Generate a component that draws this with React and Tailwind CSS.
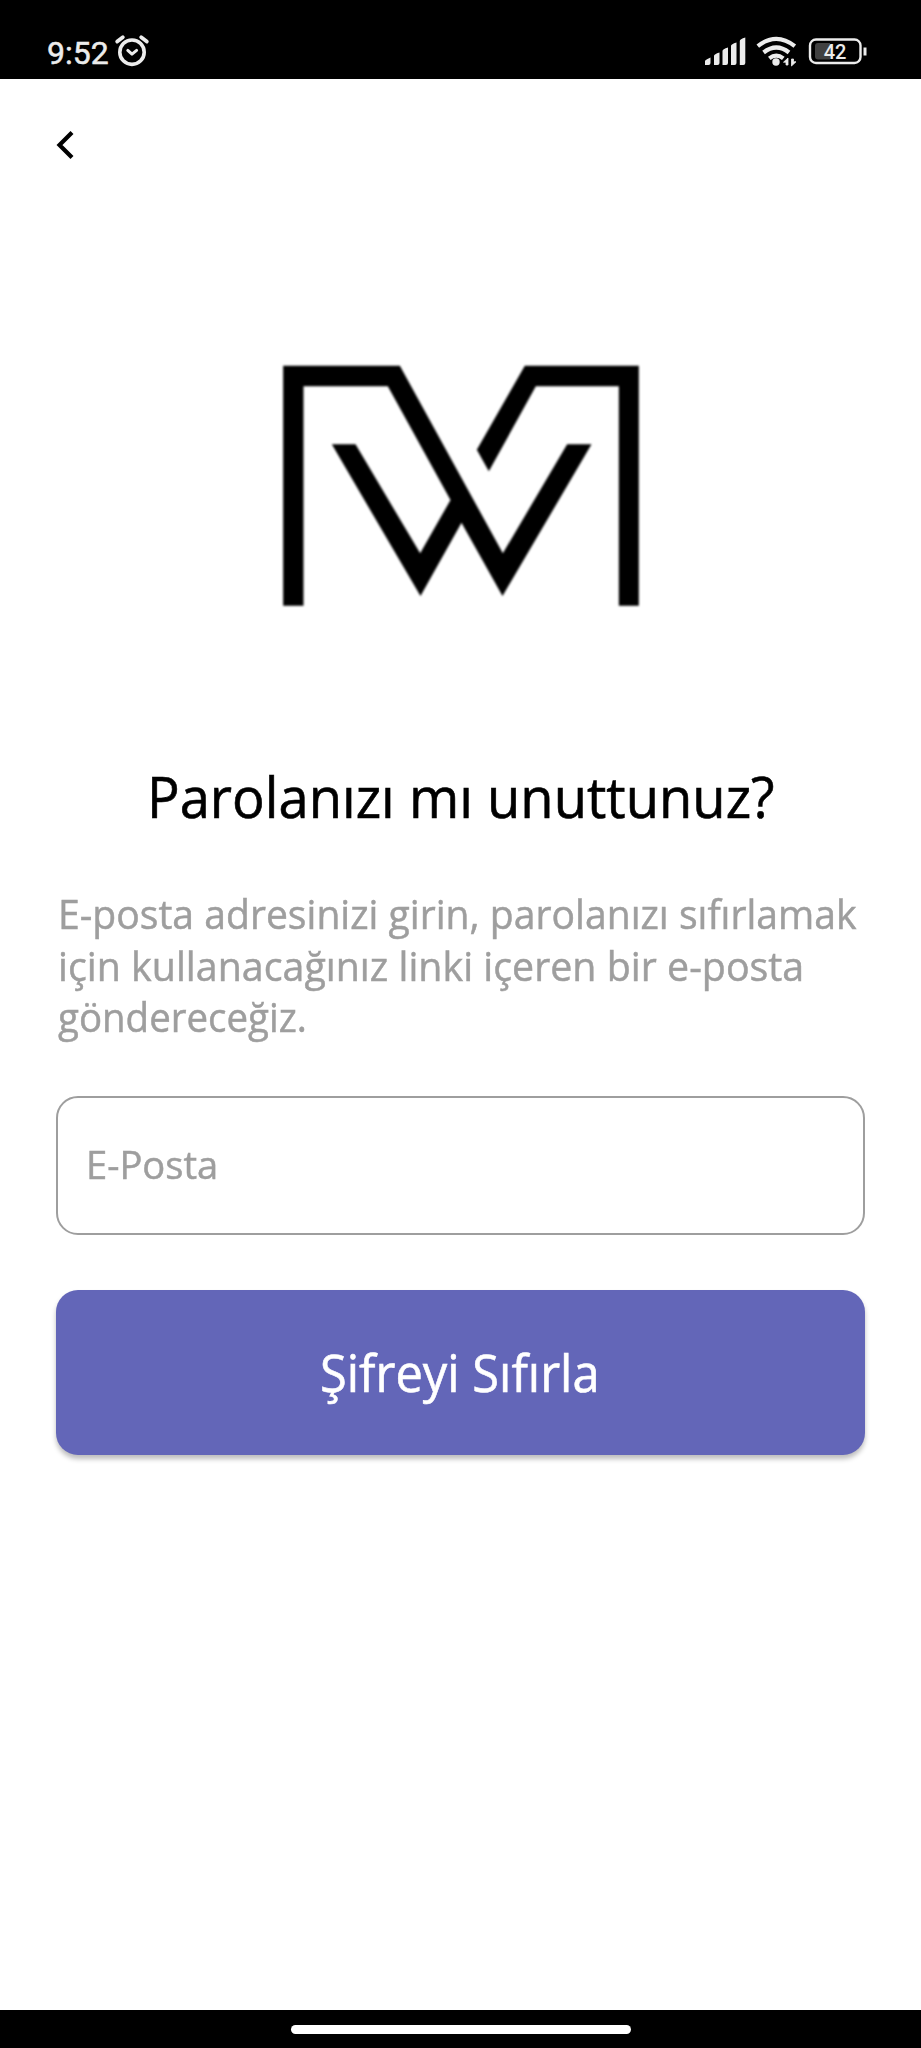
function StatusBar() {
  return (
    <header className="flex h-[79px] shrink-0 items-start justify-between bg-black pr-[53px] pl-[47px]">
      <div className="flex pt-[33px] text-[#ececec]">
        <span className="w-[67px] font-['Roboto',sans-serif] text-[32px] leading-[40px] [-webkit-text-stroke:0.5px]">9:52</span>
        <svg className="mt-[1px] h-[34px] w-[36px]" viewBox="0 0 36 34" fill="none" stroke="#ececec" strokeLinecap="round">
          <circle cx="18" cy="18.2" r="12.2" strokeWidth="3.6" />
          <path d="M3.200 7.5 8.800 3.200M32.800 7.500 27.200 3.200" strokeWidth="3.800" />
          <path d="m13.800 16.400 4.200 3.800 4.600-3.800" strokeWidth="3" strokeLinejoin="round" />
        </svg>
      </div>
      <div className="flex pt-[36px]">
        <svg className="h-[32px] w-[163px]" viewBox="0 0 163 32" fill="none">
          <g fill="#ececec" transform="translate(-.5 0)">
            <path d="M0 26q0-2 6-4.500V27q0 2-2 2H0zM9.500 20q0-2 5.500-3.500V27q0 2-2 2H9.500zM18 15q0-2 5.500-3.500V27q0 2-2 2H18zM26.500 10q0-2 5.500-3.500V27q0 2-2 2h-3.500zM35.300 5q0-2 5.500-3.500V27q0 2-2 2h-3.500z" />
            <circle cx="71.500" cy="26" r="3.700" />
            <path d="m83.500 22-4.500 4.200h2.500V29h2zM87 30l4.500-4.200H89V23h-2z" stroke="#ececec" strokeWidth=".8" />
          </g>
          <g stroke="#ececec" strokeWidth="4.200">
            <path d="M52.800 10.200q18.500-14.500 37 0" />
            <path d="M58.600 16.500q12.700-10 25.400 0" />
            <path d="M64.300 22.300q7-5.500 14 0" />
          </g>
          <rect x="105" y="3.500" width="50.500" height="23.500" rx="6" stroke="#ececec" strokeWidth="2.400" />
          <path d="M110 10q0-3 3-3h12v16.500h-12q-3 0-3-3z" fill="#414141" />
          <path d="M160 11.500v8" stroke="#ececec" strokeWidth="3" />
          <text x="130" y="23" textAnchor="middle" fill="#ececec" fontFamily="Roboto, sans-serif" fontSize="20" fontWeight="500">42</text>
        </svg>
      </div>
    </header>
  );
}

function Logo() {
  return (
    <svg className="mx-auto mt-[169px] h-[300px] w-[400px] shrink-0 blur-[1px]" viewBox="1.500 0 1200 900">
      <path d="M68 77H418L727 640 920 313H993L726 768 603 548 480 768 214 313H285L479 640 570 480 382 139H129V797H68z" />
      <path d="M793 77H1135V797H1075V139H826L685 394 649 329z" />
    </svg>
  );
}

function Text({ className, children }) {
  return <span className={`block w-max origin-left whitespace-nowrap ${className}`}>{children}</span>;
}

export default function App() {
  return (
    <div className="flex h-[2048px] w-[921px] flex-col overflow-hidden bg-white font-['Open_Sans',sans-serif]">
      <StatusBar />
      <button className="ml-[56px] mt-[51px] h-[30px] w-[20px]" aria-label="Geri">
        <svg viewBox="0 0 20 30" fill="none" stroke="black" strokeWidth="4.200">
          <path d="M16 2.500 3.500 15 16 27.500" />
        </svg>
      </button>
      <main className="flex flex-col px-[56px]">
        <div className="mt-[11px] flex flex-col">
          <Logo />
        </div>
        <h1 className="mt-[118px] flex pl-[91px] text-[56px] leading-[76px] text-black [-webkit-text-stroke:0.6px]">
          <Text className="scale-x-[0.97]">Parolanızı mı unuttunuz?</Text>
        </h1>
        <p className="mt-[54px] pl-[2px] text-[41px] leading-[51.500px] text-[#9e9e9e] [-webkit-text-stroke:0.5px]">
          <Text className="scale-x-[0.954]">E-posta adresinizi girin, parolanızı sıfırlamak</Text>
          <Text className="scale-x-[0.960]">için kullanacağınız linki içeren bir e-posta</Text>
          <Text className="scale-x-[0.938]">göndereceğiz.</Text>
        </p>
        <div className="mt-[53.5px] flex h-[139px] items-center rounded-[22px] border-2 border-[#9e9e9e] pb-[2px] pl-[28px] text-[38.500px] text-[#9e9e9e] [-webkit-text-stroke:0.5px]">
          <Text className="scale-x-[0.99]">E-Posta</Text>
        </div>
        <button className="mt-[54.5px] flex h-[165px] items-center rounded-[22px] bg-[#6366b8] pl-[264px] text-[51px] text-white shadow-[0_4px_5px_rgba(0,0,0,0.26)] [-webkit-text-stroke:0.6px]">
          <Text className="scale-x-[0.957]">Şifreyi Sıfırla</Text>
        </button>
      </main>
      <footer className="mt-auto flex h-[38px] shrink-0 justify-center bg-black pt-[15px]">
        <div className="h-[9px] w-[340px] rounded-full bg-white" />
      </footer>
    </div>
  );
}
